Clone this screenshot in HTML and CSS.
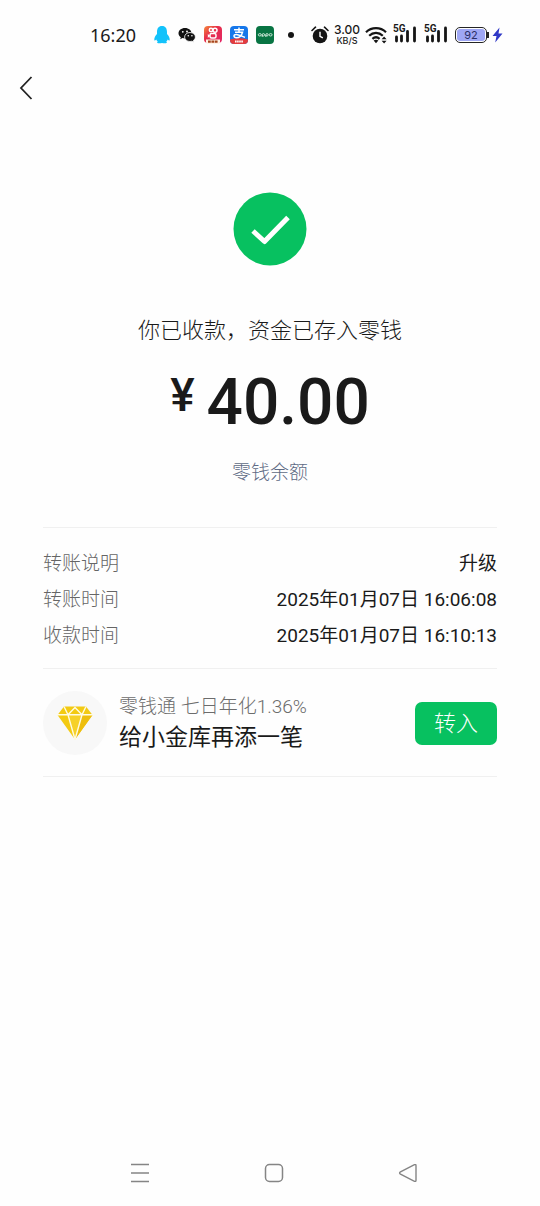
FILE: index.html
```html
<!DOCTYPE html>
<html lang="zh-CN">
<head>
<meta charset="utf-8">
<meta name="viewport" content="width=device-width, initial-scale=1">
<title>你已收款</title>
<link rel="stylesheet" href="styles.css">
</head>
<body>
<div class="screen">
  <div class="status">
    <span class="clock">16:20</span>
    <div class="apps">
      <svg width="16" height="18" viewBox="0 0 16 18"><path d="M8 0C4.500 0 3 2.600 3 6v2C1.500 9.500 0 12 .3 14c.2 1 1 .6 2-.6.3 1 .8 1.700 1.500 2.300-2 1 .2 2.200 4.200 1.400 4 .8 6.200-.4 4.200-1.400.7-.6 1.200-1.300 1.500-2.300 1 1.200 1.800 1.600 2 .6.300-2-1.200-4.500-2.700-6V6c0-3.400-1.500-6-5-6z" fill="#12c2fb"/></svg>
      <svg width="18" height="16" viewBox="0 0 18 16"><path d="M7 1C3.200 1 .5 3.300.5 6.200c0 1.700.9 3.100 2.300 4.100l-.6 2 2.300-1.200c.8.2 1.600.3 2.500.3 3.800 0 6.500-2.300 6.500-5.200S10.800 1 7 1z" fill="#111"/><path d="M12 5.500c-3 0-5.400 2-5.400 4.500s2.400 4.500 5.400 4.500c.7 0 1.300-.1 1.900-.3l1.900 1-.5-1.700c1.300-.8 2.100-2.100 2.100-3.500 0-2.500-2.400-4.500-5.400-4.500z" fill="#111" stroke="#fff" stroke-width=".8"/><g fill="#fff"><circle cx="4.800" cy="4.800" r=".9"/><circle cx="9" cy="4.500" r=".9"/><circle cx="10.300" cy="8.700" r=".8"/><circle cx="13.900" cy="8.700" r=".8"/></g></svg>
      <svg width="18" height="18" viewBox="0 0 18 18"><defs><linearGradient id="red" x1="0" y1="0" x2="1" y2="1"><stop offset="0" stop-color="#f58a3c"/><stop offset=".4" stop-color="#e62e49"/><stop offset="1" stop-color="#e32668"/></linearGradient></defs><rect width="18" height="17" rx="4" fill="url(#red)"/><g fill="none" stroke="#fff" stroke-width="1.500"><circle cx="7" cy="4" r="1.700"/><circle cx="11" cy="4.200" r="2"/><rect x="6" y="7.500" width="6" height="4.500" rx="1.500"/></g><path d="M6 9.700 3.800 8v4z" fill="#fff"/><path d="M2 13.500h14v2.500q0 2-2 2H4q-2 0-2-2z" fill="#fff3e6"/><path d="M4 15.700h10" stroke="#a8451c" stroke-width="2.200" stroke-dasharray="2.800 .6"/></svg>
      <svg width="18" height="18" viewBox="0 0 18 18"><rect width="18" height="18" rx="4" fill="#1677ea"/><path d="M0 13.500q9-3 18 0V14q0 4-4 4H4q-4 0-4-4z" fill="#e33c3e"/><g fill="none" stroke="#fff" stroke-width="1.500"><path d="M4 3.700h10M9 1.600v4.600M5 6.300h7.500c-.8 3-3.300 5.500-6 5.500-3.300 0-3.300-3.400-.2-3.400 2.200 0 5 1.600 8.700 3"/><path d="M5 15.500h8" stroke-width="1.800" stroke-dasharray="1.600 .5"/></g></svg>
      <svg width="18" height="18" viewBox="0 0 18 18"><rect width="18" height="18" rx="4" fill="#087443"/><g fill="none" stroke="#d9efe2" stroke-width=".9"><ellipse cx="3.800" cy="8.800" rx="1.500" ry="1.200"/><path d="M6.200 11V8.800"/><ellipse cx="7.400" cy="8.800" rx="1.200" ry="1.200"/><path d="M9.800 11V8.800"/><ellipse cx="11" cy="8.800" rx="1.200" ry="1.200"/><ellipse cx="14.600" cy="8.800" rx="1.500" ry="1.200"/></g></svg>
    </div>
    <span class="dot"></span>
    <div class="system">
      <svg width="18" height="18" viewBox="0 0 18 18"><circle cx="9" cy="10" r="7.300" fill="#151515"/><path d="M1 4.500 4.500 1.200M17 4.500l-3.500-3.300" stroke="#151515" stroke-width="1.600" stroke-linecap="round"/><path d="M9 5.800v4.500l2.800 1.600" fill="none" stroke="#fff" stroke-width="1.400"/></svg>
      <div class="speed"><span class="rate">3.00</span><span class="unit">KB/S</span></div>
      <svg width="23" height="18" viewBox="0 0 23 18"><g fill="none" stroke="#151515" stroke-width="2.200"><path d="M1 6.200c5.600-5.400 14.400-5.400 20 0M4.200 9.700c3.900-3.800 9.700-3.800 13.600 0M7.400 12.900c2.200-2 5-2 7.200 0"/></g><path d="m8.600 14.600 2.400 2.600 2.400-2.600q-2.400-1.800-4.800 0zM16.600 13.200h5L19.100 10.600zM16.600 14.800h5l-2.500 2.600z" fill="#151515"/></svg>
      <div class="signal"><span class="band">5G</span><svg width="25" height="17" viewBox="0 0 25 17"><path d="M3.500 11v4M8.500 10v5M14.500 5.500V15M21.500 2v13" stroke="#151515" stroke-width="2.800" stroke-linecap="round"/></svg></div>
      <div class="signal"><span class="band">5G</span><svg width="25" height="17" viewBox="0 0 25 17"><path d="M3.500 11v4M8.500 10v5M14.500 5.500V15M21.500 2v13" stroke="#151515" stroke-width="2.800" stroke-linecap="round"/></svg></div>
      <div class="power">
        <span class="battery"><span class="charge">92</span></span><span class="cap"></span>
        <svg width="11" height="16" viewBox="0 0 11 16"><path d="M7.500.5.500 9h4L3.200 15.500 10.500 6.500H6.500z" fill="#3038c6"/></svg>
      </div>
    </div>
  </div>

  <header class="topbar">
    <button class="back" aria-label="返回"><svg width="14" height="26" viewBox="0 0 14 26"><path d="M12.500 2 2 13l10.500 11" fill="none" stroke="#222" stroke-width="1.800"/></svg></button>
  </header>

  <main class="content">
    <section class="result">
      <svg class="success" width="74" height="74" viewBox="0 0 74 74"><circle cx="37" cy="37" r="36.500" fill="#07c160"/><path d="M20 39 31.500 49.500 55 25.500" fill="none" stroke="#fff" stroke-width="5" stroke-linejoin="round"/></svg>
      <h1 class="message">你已收款，资金已存入零钱</h1>
      <p class="amount"><span class="currency">¥</span><span>40.00</span></p>
      <a class="balance" href="#">零钱余额</a>
    </section>

    <dl class="details">
      <div class="row"><dt>转账说明</dt><dd>升级</dd></div>
      <div class="row"><dt>转账时间</dt><dd>2025年01月07日 16:06:08</dd></div>
      <div class="row"><dt>收款时间</dt><dd>2025年01月07日 16:10:13</dd></div>
    </dl>

    <section class="promo">
      <div class="badge"><svg width="36" height="34" viewBox="0 0 36 34"><path d="M7 .5h22L35.500 9 18 33.500.5 9z" fill="#f3ca12"/><path d="M11 9h14L18 33.500z" fill="#f6d128"/><path d="M25 9h10.500L18 33.500z" fill="#eebe0c"/><path d="M0 8.700h36M7 .5l4 8.200L18 33.500l7-24.800L29 .5M11 8.700 18 1.500l7 7.200" fill="none" stroke="#fffbe2" stroke-width="1.400"/></svg></div>
      <div class="offer">
        <p class="yield">零钱通 七日年化1.36%</p>
        <p class="slogan">给小金库再添一笔</p>
      </div>
      <button class="transfer">转入</button>
    </section>
  </main>

  <nav class="keys">
    <button class="key" aria-label="最近任务"><svg width="20" height="20" viewBox="0 0 20 20"><path d="M1 1.500h18M1 10h18M1 18.500h18" stroke="#858585" stroke-width="1.500"/></svg></button>
    <button class="key" aria-label="主屏幕"><svg width="20" height="20" viewBox="0 0 20 20"><rect x="1.500" y="1.500" width="17" height="17" rx="4" fill="none" stroke="#858585" stroke-width="1.500"/></svg></button>
    <button class="key" aria-label="返回上一级"><svg width="20" height="20" viewBox="0 0 20 20"><path d="M16.500 1.700 2.500 8.800q-1.800 1.200 0 2.400l14 7.100q1.500.5 1.500-1V2.700q0-1.500-1.500-1z" fill="none" stroke="#858585" stroke-width="1.400"/></svg></button>
  </nav>
</div>
</body>
</html>
```

FILE: styles.css
```css
* {
  box-sizing: border-box;
  margin: 0;
  padding: 0;
}

body {
  background: #fefefe;
  color: #1a1a1a;
  font-family: Roboto, "Noto Sans CJK SC", sans-serif;
}

button {
  border: 0;
  background: none;
  font: inherit;
  cursor: pointer;
}

svg {
  display: block;
  flex: none;
}

.screen {
  display: flex;
  flex-direction: column;
  min-height: 100vh;
}

/* Status bar */
.status {
  display: flex;
  align-items: center;
  justify-content: center;
  height: 69px;
  padding-left: 53px;
}

.clock {
  margin-right: 18px;
  font: 18px/24px "Noto Sans", sans-serif;
}

.apps {
  display: flex;
  align-items: center;
  gap: 8px;
}

.dot {
  width: 6px;
  height: 6px;
  margin: 0 17px 0 14px;
  border-radius: 50%;
  background: #151515;
}

.system {
  display: flex;
  align-items: center;
  gap: 5px;
}

.speed {
  display: flex;
  flex-direction: column;
  align-items: center;
  width: 26px;
  font-family: Inter, sans-serif;
  font-weight: 500;
}

.rate {
  font-size: 12px;
  line-height: 12px;
}

.unit {
  font-size: 9px;
  line-height: 9px;
}

.signal {
  position: relative;
  width: 26px;
}

.band {
  position: absolute;
  left: 0;
  top: -2px;
  font: 700 10px/10px Roboto, sans-serif;
}

.power {
  display: flex;
  align-items: center;
}

.battery {
  width: 32px;
  height: 16px;
  padding: 1px;
  border: 1px solid #252525;
  border-radius: 5px;
}

.charge {
  display: block;
  border-radius: 3px;
  background: #9fa7f4;
  color: #2b2f66;
  font: 11px/12px Inter, sans-serif;
  text-align: center;
}

.cap {
  width: 2px;
  height: 6px;
  margin-right: 3px;
  background: #252525;
}

/* Page header */
.topbar {
  display: flex;
  align-items: center;
  height: 38px;
  padding: 0 12px;
}

.back {
  padding: 6px 7px;
}

/* Transfer result */
.content {
  flex: 1;
  padding: 85px 43px 0;
}

.result {
  display: flex;
  flex-direction: column;
  align-items: center;
  padding-bottom: 40px;
}

.message {
  margin-top: 49px;
  font-size: 22px;
  font-weight: 300;
  line-height: 32px;
}

.amount {
  display: flex;
  align-items: flex-start;
  gap: 12px;
  margin-top: 16px;
  font-size: 64px;
  font-weight: 500;
  line-height: 80px;
}

.currency {
  font-size: 46px;
  line-height: 64px;
}

.balance {
  margin-top: 16px;
  color: #5f6b85;
  font-size: 19px;
  font-weight: 300;
  line-height: 28px;
  text-decoration: none;
}

.details {
  padding: 18px 0 14px;
  border-top: 1px solid #f0f0f0;
  border-bottom: 1px solid #f0f0f0;
}

.row {
  display: flex;
  justify-content: space-between;
  font-size: 19px;
  line-height: 36px;
}

.row dt {
  color: #656565;
  font-weight: 300;
}

/* Promotion */
.promo {
  display: flex;
  align-items: center;
  gap: 12px;
  padding: 22px 0 21px;
  border-bottom: 1px solid #f0f0f0;
}

.badge {
  display: grid;
  place-items: center;
  width: 64px;
  height: 64px;
  border-radius: 50%;
  background: #f8f8f8;
}

.offer {
  flex: 1;
}

.yield {
  color: #6c6c6c;
  font-size: 19px;
  font-weight: 300;
  line-height: 30px;
}

.slogan {
  font-size: 23px;
  line-height: 32px;
}

.transfer {
  padding: 0 19px;
  border-radius: 7px;
  background: #07c160;
  color: #fff;
  font-size: 22px;
  font-weight: 300;
  line-height: 43px;
}

/* System navigation */
.keys {
  display: flex;
  justify-content: center;
  gap: 94px;
  padding: 0 0 13px 8px;
}

.key {
  padding: 10px;
}
```
